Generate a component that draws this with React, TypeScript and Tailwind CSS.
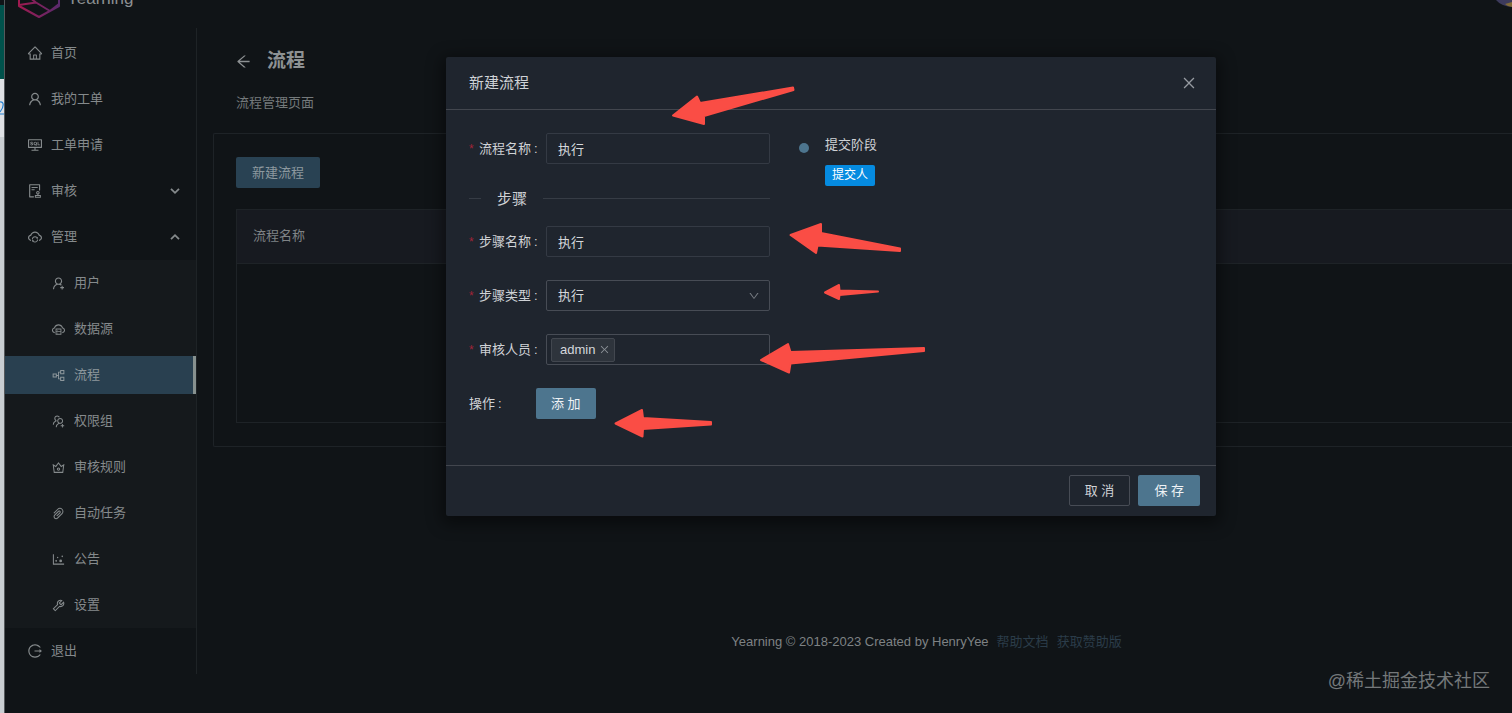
import type { ReactNode } from "react";
import {
  AiOutlineArrowLeft,
  AiOutlineAudit,
  AiOutlineClose,
  AiOutlineCloudServer,
  AiOutlineCloudSync,
  AiOutlineConsoleSql,
  AiOutlineCrown,
  AiOutlineDotChart,
  AiOutlineDown,
  AiOutlineHome,
  AiOutlineLogout,
  AiOutlinePaperClip,
  AiOutlinePartition,
  AiOutlineTool,
  AiOutlineUser,
  AiOutlineUserAdd,
  AiOutlineUsergroupAdd,
} from "react-icons/ai";

function Chevron({ up }: { up?: boolean }) {
  return (
    <svg viewBox="0 0 10 10" className="h-[10px] w-[10px]" fill="none" stroke="currentColor" strokeWidth="1.8">
      <path d={up ? "M1 7.2 5 3.2l4 4" : "M1 2.8 5 6.8l4-4"} />
    </svg>
  );
}

type ItemProps = { icon: ReactNode; label: string; nested?: boolean; active?: boolean; trailing?: ReactNode };

function MenuItem({ icon, label, nested, active, trailing }: ItemProps) {
  return (
    <li className="py-1">
      <a
        href="#"
        className={`flex h-[38px] items-center gap-2 pr-4 ${nested ? "pl-[46px]" : "pl-[22px]"} ${
          active ? "border-r-[3px] border-[#87918f] bg-[#294050] text-[#8d979c]" : "text-[#858a8c]"
        }`}
      >
        <span className={nested ? "text-[15px]" : "text-[16px]"}>{icon}</span>
        <span className="flex-1">{label}</span>
        {trailing}
      </a>
    </li>
  );
}

function Sidebar() {
  return (
    <nav className="w-48 shrink-0 self-start border-r border-[#1e2326] pt-[2px]">
      <ul>
        <MenuItem icon={<AiOutlineHome />} label="首页" />
        <MenuItem icon={<AiOutlineUser />} label="我的工单" />
        <MenuItem icon={<AiOutlineConsoleSql />} label="工单申请" />
        <MenuItem icon={<AiOutlineAudit />} label="审核" trailing={<Chevron />} />
        <MenuItem icon={<AiOutlineCloudSync />} label="管理" trailing={<Chevron up />} />
        <li>
          <ul className="bg-[#15191c]">
            <MenuItem nested icon={<AiOutlineUserAdd />} label="用户" />
            <MenuItem nested icon={<AiOutlineCloudServer />} label="数据源" />
            <MenuItem nested active icon={<AiOutlinePartition />} label="流程" />
            <MenuItem nested icon={<AiOutlineUsergroupAdd />} label="权限组" />
            <MenuItem nested icon={<AiOutlineCrown />} label="审核规则" />
            <MenuItem nested icon={<AiOutlinePaperClip />} label="自动任务" />
            <MenuItem nested icon={<AiOutlineDotChart />} label="公告" />
            <MenuItem nested icon={<AiOutlineTool />} label="设置" />
          </ul>
        </li>
        <MenuItem icon={<AiOutlineLogout />} label="退出" />
      </ul>
    </nav>
  );
}

function TopBar() {
  return (
    <header className="flex h-7 items-start justify-between overflow-hidden">
      <div className="-mt-[30px] flex items-start gap-[6px] pl-3">
        <svg viewBox="0 0 44 48" className="h-12 w-11" fill="none" strokeWidth="2" strokeLinejoin="round">
          <defs>
            <linearGradient id="logo" x1="0" y1="0" x2="1" y2="0">
              <stop offset="0" stopColor="#a01a50" />
              <stop offset="1" stopColor="#5a2a6c" />
            </linearGradient>
          </defs>
          <path d="M22 2 42 14v22L22 47 2 36V14zM2 35l17-2.500 14 8.500 9-7M19 32.500l-4-3" stroke="url(#logo)" />
        </svg>
        <span className="pt-[17px] text-[17px] leading-6 text-[#8c9092]">Yearning</span>
      </div>
      <svg viewBox="0 0 16 8" className="h-2 w-4">
        <path d="M0 0h16v7Q5 6 0 0" fill="#3c3a5c" />
        <path d="M9 4l7-2v5q-4 0-7-3" fill="#806a37" />
      </svg>
    </header>
  );
}

function FlowPage() {
  return (
    <main className="min-w-0 flex-1 pl-4">
      <div className="flex h-[66px] items-center gap-[15px] pl-[22px] text-[#8d9193]">
        <button aria-label="返回" className="text-[17px]">
          <AiOutlineArrowLeft />
        </button>
        <h1 className="text-[19px] font-bold leading-7">流程</h1>
      </div>
      <p className="h-[39px] pl-[23px] leading-[18px] text-[#74797b]">流程管理页面</p>
      <section className="rounded-l-[2px] border border-r-0 border-[#1e2327] pb-[23px] pl-[22px] pt-[23px]">
        <button className="h-[31px] rounded-[2px] bg-[#294253] px-4 text-[#8d999f]">新建流程</button>
        <div className="mt-[21px] h-[214px] border border-r-0 border-[#1e2327]">
          <table className="w-full">
            <thead>
              <tr className="h-[53px] border-b border-[#1e2327] bg-[#171a20]">
                <th scope="col" className="pl-4 text-left font-normal text-[#7f8386]">
                  流程名称
                </th>
              </tr>
            </thead>
          </table>
        </div>
      </section>
      <footer className="flex justify-center gap-2 pl-32 pt-[185px] leading-5 text-[#7e8284]">
        <span>Yearning © 2018-2023 Created by HenryYee</span>
        <a href="#" className="text-[#2b3c49]">帮助文档</a>
        <a href="#" className="text-[#2b3c49]">获取赞助版</a>
      </footer>
    </main>
  );
}

function Label({ id, children }: { id: string; children: ReactNode }) {
  return (
    <label htmlFor={id} className="flex w-[77px] shrink-0 items-center">
      <span className="w-[10px] text-[12px] text-[#a02438]">*</span>
      {children}
      <span className="pl-[3px]">:</span>
    </label>
  );
}

const field = "h-[31px] w-full min-w-0 rounded-[2px] border bg-transparent text-[#d5d8dc] outline-none";

function FlowForm() {
  return (
    <form className="flex w-[301px] shrink-0 flex-col gap-[23px]">
      <div className="flex">
        <Label id="flow-name">流程名称</Label>
        <input id="flow-name" defaultValue="执行" className={`${field} border-[#343a44] px-[11px]`} />
      </div>
      <div className="-mb-[7px] flex h-[23px] items-center gap-4">
        <span className="h-px w-3 bg-[#363c45]" />
        <h3 className="text-[15px]">步骤</h3>
        <span className="h-px flex-1 bg-[#363c45]" />
      </div>
      <div className="flex">
        <Label id="step-name">步骤名称</Label>
        <input id="step-name" defaultValue="执行" className={`${field} border-[#343a44] px-[11px]`} />
      </div>
      <div className="flex">
        <Label id="step-type">步骤类型</Label>
        <div className="relative flex-1">
          <select id="step-type" className={`${field} appearance-none border-[#474c55] px-[11px]`}>
            <option>执行</option>
          </select>
          <AiOutlineDown className="pointer-events-none absolute right-[10px] top-[10px] text-[12px] text-[#777c83]" />
        </div>
      </div>
      <div className="flex">
        <Label id="auditor">审核人员</Label>
        <div className={`${field} flex items-center border-[#474c55] pl-1`}>
          <span className="flex h-6 shrink-0 items-center gap-1 rounded-[2px] border border-[#42474f] bg-[#2e343c] pl-2 pr-1">
            admin
            <button type="button" aria-label="移除 admin" className="text-[11px] text-[#8b9097]">
              <AiOutlineClose />
            </button>
          </span>
          <input id="auditor" className="w-0 min-w-0 flex-1 bg-transparent outline-none" />
        </div>
      </div>
      <div className="flex items-center">
        <span className="w-[67px]">
          操作<span className="pl-[3px]">:</span>
        </span>
        <button type="button" className="h-[31px] rounded-[2px] bg-[#4d758e] px-[15px] text-[#eef2f5]">
          添 加
        </button>
      </div>
    </form>
  );
}

function Arrows() {
  return (
    <svg
      viewBox="446 57 770 459"
      className="pointer-events-none absolute inset-0 h-full w-full"
      fill="#fa4d45"
      stroke="#fa4d45"
      strokeWidth="2"
      strokeLinejoin="round"
    >
      <path d="M673 115.500 697 96.500 700 103 793 87.500 793.500 90 704 116 704 124Z" />
      <path d="M790.500 235 821 224 821 233 900 248.500 900 251 817.500 245.500 816 253Z" />
      <path d="M825 292.500 839 285 839.500 290.500 878 291.500 839.500 295 839 299Z" />
      <path d="M761 360 788 344 790.500 352 924 348 924 351 790.500 363.500 789 372.500Z" />
      <path d="M615.500 423.500 642 410 643 418 711 422 711 424.500 643 429 642.500 436.500Z" />
    </svg>
  );
}

function FlowDialog() {
  return (
    <div className="absolute inset-0 flex items-start justify-center pl-[150px] pt-[57px]">
      <div
        role="dialog"
        aria-labelledby="dialog-title"
        className="relative w-[770px] rounded-[2px] bg-[#1f252e] text-[#cfd2d6] shadow-[0_4px_16px_4px_rgba(0,0,0,0.45)]"
      >
        <div className="flex h-[53px] items-center justify-between border-b border-[#42464e] pl-[23px] pr-[19px]">
          <h2 id="dialog-title" className="text-[15px]">新建流程</h2>
          <button aria-label="关闭" className="text-[16px] text-[#969ba1]">
            <AiOutlineClose />
          </button>
        </div>
        <div className="flex gap-[29px] px-[23px] pb-[46px] pt-[23px]">
          <FlowForm />
          <ol>
            <li className="flex gap-4">
              <span className="mt-[10px] h-[10px] w-[10px] rounded-full bg-[#4d758e]" />
              <div className="flex flex-col items-start gap-[10px] pt-[2px]">
                <span className="leading-5">提交阶段</span>
                <span className="h-[21px] rounded-[2px] bg-[#058be0] px-[7px] text-[12px] leading-[20px] text-white">
                  提交人
                </span>
              </div>
            </li>
          </ol>
        </div>
        <div className="flex justify-end gap-2 border-t border-[#42464e] px-4 pb-[10px] pt-[9px]">
          <button className="h-[31px] rounded-[2px] border border-[#474c55] px-[15px]">取 消</button>
          <button className="h-[31px] rounded-[2px] bg-[#4d758e] px-4 text-[#eef2f5]">保 存</button>
        </div>
        <Arrows />
      </div>
    </div>
  );
}

function WindowEdge() {
  return (
    <div aria-hidden="true" className="flex w-[5px] shrink-0 flex-col border-r border-[#55595c] bg-[#c9ced2]">
      <span className="h-[5px] bg-[#101417]" />
      <span className="h-[74px] bg-[#00524c]" />
      <span className="flex h-[58px] items-center bg-[#dfe1e5]">
        <svg viewBox="0 0 5 18" className="h-[18px] w-[5px]" fill="none" stroke="#2582d2" strokeWidth="1.5">
          <path d="M0 1.500Q4 1 4 5T0 14M0 16.500h5" />
        </svg>
      </span>
    </div>
  );
}

export default function App() {
  return (
    <div className="relative flex min-h-screen overflow-hidden bg-[#101417] font-['Liberation_Sans','Noto_Sans_CJK_SC',sans-serif] text-[13px] leading-5">
      <WindowEdge />
      <div className="min-w-0 flex-1">
        <TopBar />
        <div className="flex">
          <Sidebar />
          <FlowPage />
        </div>
      </div>
      <FlowDialog />
      <span className="absolute bottom-5 right-[22px] text-[18px] leading-6 text-[#74787a]">@稀土掘金技术社区</span>
    </div>
  );
}
